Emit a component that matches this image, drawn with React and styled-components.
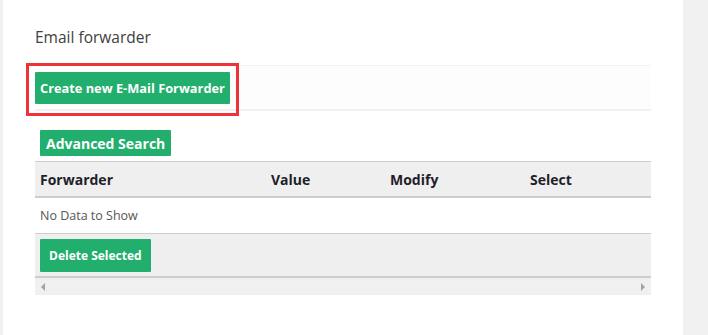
import React from "react";
import styled, { createGlobalStyle } from "styled-components";

const GlobalStyle = createGlobalStyle`
	html, body {
		margin: 0;
		padding: 0;
		background: #f0f0f0;
		font-family: "Open Sans", "Liberation Sans", sans-serif;
	}
`;

const Page = styled.div`
	display: flex;
	height: 335px;
	padding-left: 3px;
`;

const Panel = styled.div`
	width: 680px;
	background: #fff;
	padding: 27px 32px 0;
	box-sizing: border-box;
`;

const Title = styled.h3`
	margin: 0 0 17px;
	font-family: "Open Sans", "Liberation Sans", sans-serif;
	font-weight: 400;
	font-size: 15.5px;
	line-height: 21px;
	color: #404040;
`;

const Toolbar = styled.div`
	position: relative;
	width: 616px;
	height: 46px;
	box-sizing: border-box;
	border-top: 1px solid #f3f3f3;
	border-bottom: 2px solid #f1f1f1;
	background: #fdfdfd;
	display: flex;
	align-items: center;
`;

const Highlight = styled.div`
	position: absolute;
	left: -9px;
	top: -3px;
	width: 213px;
	height: 53px;
	border: 3px solid #ee3338;
	box-sizing: border-box;
	pointer-events: none;
`;

const GreenButton = styled.button`
	border: none;
	background: #22ae6c;
	color: #fff;
	font-family: "Open Sans", "Liberation Sans", sans-serif;
	font-weight: 700;
	font-size: ${(p) => p.$size || 12.8}px;
	height: ${(p) => p.$h || 32}px;
	padding: 0 ${(p) => p.$px || 5}px;
	border-radius: 1px;
	cursor: pointer;
	white-space: nowrap;
`;

const SearchRow = styled.div`
	padding: 19px 0 5px 5px;
	display: flex;
`;

const Table = styled.div`
	width: 616px;
`;

const HeadRow = styled.div`
	display: grid;
	grid-template-columns: 231px 119px 140px 1fr;
	height: 37px;
	box-sizing: border-box;
	align-items: center;
	padding-left: 5px;
	background: #efefef;
	border-top: 1px solid #cdcdcd;
	border-bottom: 2px solid #cdcdcd;
`;

const HeadCell = styled.div`
	font-weight: 700;
	font-size: 14px;
	color: #1f1f2a;
`;

const EmptyRow = styled.div`
	height: 35px;
	display: flex;
	align-items: center;
	padding-left: 5px;
	font-size: 12.5px;
	color: #555;
`;

const Footer = styled.div`
	height: 45px;
	box-sizing: border-box;
	background: #efefef;
	border-top: 1px solid #cdcdcd;
	border-bottom: 2px solid #cdcdcd;
	padding: 5px 5px 0;
`;

const ScrollBar = styled.div`
	height: 17px;
	background: #f0f0f0;
	display: flex;
	align-items: center;
	justify-content: space-between;
	padding: 0 6px;
`;

const Arrow = styled.span`
	width: 0;
	height: 0;
	border-top: 4px solid transparent;
	border-bottom: 4px solid transparent;
	${(p) =>
		p.$dir === "left"
			? "border-right: 4px solid #a3a3a3;"
			: "border-left: 4px solid #a3a3a3;"}
`;

const SidePanel = styled.div`
	flex: 1;
	background: #f0f0f0;
`;

export default function App() {
	return (
		<>
			<GlobalStyle />
			<Page>
				<Panel>
					<Title>Email forwarder</Title>
					<Toolbar>
						<GreenButton>Create new E-Mail Forwarder</GreenButton>
						<Highlight />
					</Toolbar>
					<SearchRow>
						<GreenButton $size={14} $h={26} $px={6}>
							Advanced Search
						</GreenButton>
					</SearchRow>
					<Table>
						<HeadRow>
							<HeadCell>Forwarder</HeadCell>
							<HeadCell>Value</HeadCell>
							<HeadCell>Modify</HeadCell>
							<HeadCell>Select</HeadCell>
						</HeadRow>
						<EmptyRow>No Data to Show</EmptyRow>
						<Footer>
							<GreenButton $size={12} $h={33} $px={9}>
								Delete Selected
							</GreenButton>
						</Footer>
						<ScrollBar>
							<Arrow $dir="left" />
							<Arrow $dir="right" />
						</ScrollBar>
					</Table>
				</Panel>
				<SidePanel />
			</Page>
		</>
	);
}
